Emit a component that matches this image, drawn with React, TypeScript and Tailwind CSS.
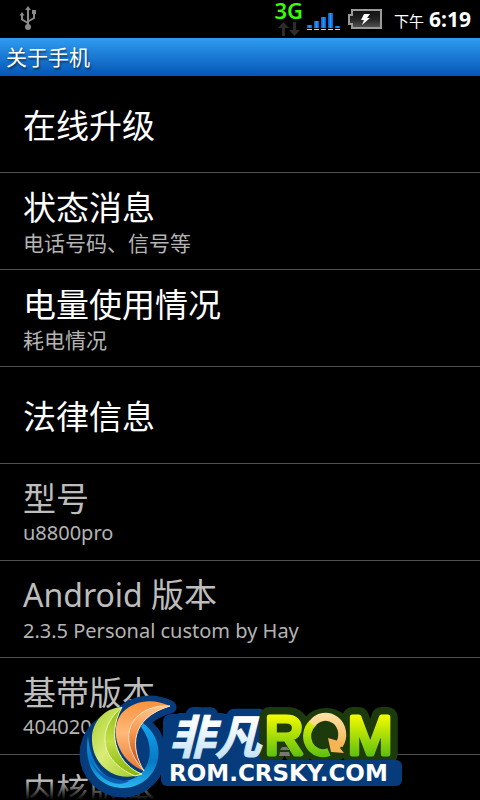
import React from "react";

interface RowProps {
  title: React.ReactNode;
  detail?: string;
  latin?: boolean;
  disabled?: boolean;
}

function UsbIcon() {
  return (
    <svg width="18" height="26" viewBox="0 0 18 26" fill="none" stroke="#8a8a8a" strokeWidth="2" aria-label="USB">
      <path d="M9 3v18M3 9v4.5l6 3.5M15 8v4l-6 3.5" />
      <path d="M9 0l3 4H6zM3 6l2.500 3.500h-5z" fill="#8a8a8a" stroke="none" />
      <rect x="13" y="4" width="4" height="4" fill="#8a8a8a" stroke="none" />
      <circle cx="9" cy="21" r="3" fill="#8a8a8a" stroke="none" />
    </svg>
  );
}

function DataArrows() {
  return (
    <svg width="22" height="14" viewBox="0 0 22 14" fill="#2f2b2b" aria-hidden="true">
      <path d="M5.500 0L11 6H7v8H4V6H0z" />
      <path d="M16.500 14L11 8h4V0h3v8h4z" />
    </svg>
  );
}

function SignalIcon() {
  const bars = [
    { x: 0, h: 3 },
    { x: 7, h: 7 },
    { x: 14, h: 11 },
    { x: 21, h: 15 },
    { x: 28, h: 2 },
  ];
  return (
    <svg width="33" height="17" viewBox="0 0 33 17" aria-label="Signal">
      <defs>
        <linearGradient id="bar" x1="0" x2="1">
          <stop offset="0" stopColor="#0a55c8" />
          <stop offset=".5" stopColor="#2496fa" />
          <stop offset="1" stopColor="#0a55c8" />
        </linearGradient>
      </defs>
      {bars.map((b) => (
        <g key={b.x}>
          <rect x={b.x} y={15 - b.h} width="5" height={b.h} fill="url(#bar)" />
          <rect x={b.x} y="16" width="5" height="1" fill="#c9d3dc" />
        </g>
      ))}
    </svg>
  );
}

function BatteryIcon() {
  return (
    <svg width="34" height="20" viewBox="0 0 34 20" aria-label="Charging">
      <defs>
        <linearGradient id="cell" x1="0" x2="0" y1="0" y2="1">
          <stop offset="0" stopColor="#111" />
          <stop offset=".5" stopColor="#222" />
          <stop offset="1" stopColor="#555" />
        </linearGradient>
      </defs>
      <path d="M4 1h29v18H4v-4H1V6h3z" fill="url(#cell)" stroke="#9a9a9a" strokeWidth="2" />
      <path d="M16 5h6l-3 4h3l-8 7 2-5h-3z" fill="#fff" />
    </svg>
  );
}

function StatusBar() {
  return (
    <header className="flex h-[38px] items-start justify-between pl-[19px] pr-[9px]">
      <div className="pt-[6px]">
        <UsbIcon />
      </div>
      <div className="flex items-start">
        <div className="mr-1 flex flex-col items-center">
          <span className="h-[22px] font-['Noto_Sans'] text-[22px] leading-[21px] font-semibold text-[#37ff00]">3G</span>
          <DataArrows />
        </div>
        <div className="mr-2 pt-[13px]">
          <SignalIcon />
        </div>
        <div className="mr-3 pt-[9px]">
          <BatteryIcon />
        </div>
        <div className="flex items-baseline gap-[5px] text-white">
          <span className="text-[15px]">下午</span>
          <span className="font-['Noto_Sans'] text-[21px] leading-[39px] font-bold">6:19</span>
        </div>
      </div>
    </header>
  );
}

function Row({ title, detail, latin, disabled }: RowProps) {
  return (
    <li className="border-b border-[#505050]">
      <button
        type="button"
        disabled={disabled}
        className={`flex h-24 w-full flex-col justify-center pl-[23px] text-left ${
          disabled ? "text-[#bdbdbd]" : "text-white"
        }`}
      >
        <span className="text-[33px] leading-[42px]">{title}</span>
        {detail && (
          <span className={`leading-[30px] text-[#b4b4b4] ${latin ? "font-['Noto_Sans'] text-[20px]" : "text-[21px]"}`}>
            {detail}
          </span>
        )}
      </button>
    </li>
  );
}

function RomBadge() {
  return (
    <svg width="330" height="110" viewBox="0 0 330 110" aria-label="非凡ROM">
      <defs>
        <linearGradient id="leaf" x1="0" x2="1" y1="0" y2="1">
          <stop offset="0" stopColor="#a9cf2e" />
          <stop offset=".45" stopColor="#d9ec78" />
          <stop offset="1" stopColor="#9cc81e" />
        </linearGradient>
        <linearGradient id="leafInner" x1="0" x2="0" y1="0" y2="1">
          <stop offset="0" stopColor="#8fbc14" />
          <stop offset=".5" stopColor="#c3de48" />
          <stop offset="1" stopColor="#86b40c" />
        </linearGradient>
        <linearGradient id="flame" x1="0" x2="0" y1="0" y2="1">
          <stop offset="0" stopColor="#f9923c" />
          <stop offset=".45" stopColor="#ffb878" />
          <stop offset="1" stopColor="#e87a34" />
        </linearGradient>
        <linearGradient id="flameInner" x1="0" x2="0" y1="0" y2="1">
          <stop offset="0" stopColor="#ffc68c" />
          <stop offset=".4" stopColor="#f79850" />
          <stop offset="1" stopColor="#b83c08" />
        </linearGradient>
        <linearGradient id="wave" x1="0" x2="0" y1="0" y2="1">
          <stop offset="0" stopColor="#12a8ee" />
          <stop offset=".6" stopColor="#0878c4" />
          <stop offset="1" stopColor="#28b8ee" />
        </linearGradient>
        <linearGradient id="ice" x1="0" x2="0" y1="0" y2="1">
          <stop offset=".3" stopColor="#fff" />
          <stop offset="1" stopColor="#b5dcf5" />
        </linearGradient>
        <linearGradient id="lime" x1="0" x2="0" y1="25" y2="66" gradientUnits="userSpaceOnUse">
          <stop offset="0" stopColor="#f4fb00" />
          <stop offset="1" stopColor="#5fc010" />
        </linearGradient>
        <linearGradient id="amber" x1="0" x2="0" y1="25" y2="66" gradientUnits="userSpaceOnUse">
          <stop offset="0" stopColor="#ffe0a0" />
          <stop offset="1" stopColor="#f0a840" />
        </linearGradient>
      </defs>

      {/* backing shapes */}
      <g fill="#063c7c" stroke="#063c7c" strokeLinejoin="round">
        <circle cx="48" cy="64" r="43" />
        <path d="M95 17C78 9 60 11 48 22C34 36 38 66 69 81C55 60 55 28 95 17Z" strokeWidth="13" />
        <rect x="88" y="24" width="96" height="60" rx="8" stroke="none" />
        <text x="94" y="64" className="font-['Noto_Sans_CJK_SC',sans-serif] text-[46px] font-bold italic" strokeWidth="16">
          非凡
        </text>
      </g>
      <g fill="#1c3a0c" stroke="#1c3a0c" strokeWidth="20" strokeLinejoin="round">
        <text x="190" y="64" className="font-['Liberation_Sans',sans-serif] text-[53px]">R</text>
        <circle cx="251" cy="46" r="18" />
        <text x="273" y="64" className="font-['Liberation_Sans',sans-serif] text-[53px]">M</text>
      </g>
      <rect x="86" y="70" width="241" height="26" rx="6" fill="#063c7c" />

      {/* globe */}
      <path d="M13 46C8 76 22 98 49 98C84 96 96 54 68 33L66 37C84 60 72 89 50 91C32 92 16 78 13 46Z" fill="url(#wave)" />
      <path d="M14 66C20 82 34 90 54 91C44 98 22 92 14 66Z" fill="#0a5fae" />
      <path d="M47 17C28 18 16 34 17 51C18 75 40 94 67 84C45 76 30 48 47 17Z" fill="url(#leaf)" />
      <path d="M47 17C22 38 23 70 60 86L67 84C45 76 30 48 47 17Z" fill="url(#leafInner)" stroke="#eef7b4" strokeWidth="1" />
      <path d="M95 16C78 8 60 10 48 22C35 35 38 68 69 81C55 58 55 28 95 16Z" fill="url(#flame)" />
      <path d="M95 16C58 14 38 46 69 81C55 58 55 28 95 16Z" fill="url(#flameInner)" stroke="#ffe0c0" strokeWidth="1" />

      {/* lettering */}
      <text x="94" y="64" fill="url(#ice)" className="font-['Noto_Sans_CJK_SC',sans-serif] text-[46px] font-bold italic" stroke="url(#ice)" strokeWidth="1">
        非凡
      </text>
      <g fill="url(#lime)" stroke="url(#lime)" strokeWidth="5" strokeLinejoin="round">
        <text x="190" y="64" className="font-['Liberation_Sans',sans-serif] text-[53px]">R</text>
        <text x="273" y="64" className="font-['Liberation_Sans',sans-serif] text-[53px]">M</text>
      </g>
      <path d="M238 33A16 17 0 0 0 254 62" fill="none" stroke="url(#lime)" strokeWidth="8" />
      <path d="M237 34A16 17 0 0 1 264 55" fill="none" stroke="url(#amber)" strokeWidth="8" />
      <path d="M253 48L256 62L269 63L265 58L269 53L260 50Z" fill="#f5b455" />
      <path d="M207 57h5l3 3h-10zM205 62h9l1 4h-11z" fill="#77786f" />
      <text x="94" y="91" fill="#fff" className="font-['DejaVu_Sans',sans-serif] text-[23px] font-bold">
        ROM.CRSKY.COM
      </text>
    </svg>
  );
}

export default function App() {
  return (
    <div className="relative flex h-screen flex-col overflow-hidden bg-black font-['Noto_Sans_CJK_SC',sans-serif]">
      <StatusBar />
      <h1 className="h-[38px] shrink-0 bg-linear-to-b from-[#2f9cf2] to-[#0656b4] pl-[6px] text-[21px] leading-[36px] text-white text-shadow-[1px_2px_2px_rgb(0_0_0/0.5)]">
        关于手机
      </h1>
      <main className="min-h-0 flex-1 overflow-hidden">
        <ul>
          <Row title="在线升级" />
          <Row title="状态消息" detail="电话号码、信号等" />
          <Row title="电量使用情况" detail="耗电情况" />
          <Row title="法律信息" />
          <Row title="型号" detail="u8800pro" latin disabled />
          <Row
            title={
              <>
                <span className="font-['Noto_Sans'] text-[32px]">Android </span>版本
              </>
            }
            detail="2.3.5 Personal custom by Hay"
            latin
            disabled
          />
          <Row title="基带版本" detail="404020" latin disabled />
          <Row title="内核版本" latin disabled detail="2.6.35.7" />
        </ul>
      </main>
      <div className="pointer-events-none absolute inset-x-0 bottom-0 h-5 bg-linear-to-t from-black to-transparent" />
      <div className="pointer-events-none absolute inset-x-0 bottom-0 flex justify-center">
        <RomBadge />
      </div>
    </div>
  );
}
